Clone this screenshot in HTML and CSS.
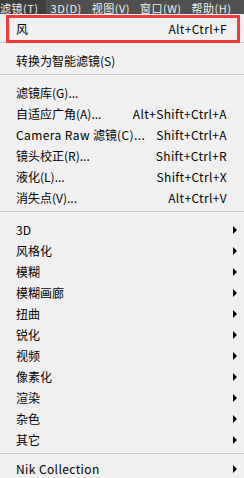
FILE: index.html
```html
<!DOCTYPE html>
<html lang="zh-CN">
<head>
  <meta charset="UTF-8" />
  <title>滤镜菜单</title>
  <link rel="stylesheet" href="styles.css">
</head>
<body>
  <div class="menubar">
    <span class="bar-item active">滤镜(T)</span>
    <span class="bar-item">3D(D)</span>
    <span class="bar-item">视图(V)</span>
    <span class="bar-item">窗口(W)</span>
    <span class="bar-item">帮助(H)</span>
  </div>

  <div class="menu">
    <div class="row hl"><span class="label">风</span><span class="key">Alt+Ctrl+F</span></div>
    <div class="sep"></div>
    <div class="row"><span class="label">转换为智能滤镜(S)</span></div>
    <div class="sep"></div>
    <div class="row"><span class="label">滤镜库(G)...</span></div>
    <div class="row"><span class="label">自适应广角(A)...</span><span class="key">Alt+Shift+Ctrl+A</span></div>
    <div class="row"><span class="label"><span class="lat">Camera Raw </span>滤镜<span class="lat">(C)...</span></span><span class="key">Shift+Ctrl+A</span></div>
    <div class="row"><span class="label">镜头校正(R)...</span><span class="key">Shift+Ctrl+R</span></div>
    <div class="row"><span class="label">液化(L)...</span><span class="key">Shift+Ctrl+X</span></div>
    <div class="row"><span class="label">消失点(V)...</span><span class="key">Alt+Ctrl+V</span></div>
    <div class="sep"></div>
    <div class="row"><span class="label">3D</span><span class="arrow"></span></div>
    <div class="row"><span class="label">风格化</span><span class="arrow"></span></div>
    <div class="row"><span class="label">模糊</span><span class="arrow"></span></div>
    <div class="row"><span class="label">模糊画廊</span><span class="arrow"></span></div>
    <div class="row"><span class="label">扭曲</span><span class="arrow"></span></div>
    <div class="row"><span class="label">锐化</span><span class="arrow"></span></div>
    <div class="row"><span class="label">视频</span><span class="arrow"></span></div>
    <div class="row"><span class="label">像素化</span><span class="arrow"></span></div>
    <div class="row"><span class="label">渲染</span><span class="arrow"></span></div>
    <div class="row"><span class="label">杂色</span><span class="arrow"></span></div>
    <div class="row"><span class="label">其它</span><span class="arrow"></span></div>
    <div class="sep last"></div>
    <div class="row end"><span class="label lat">Nik Collection</span><span class="arrow"></span></div>
  </div>
</body>
</html>
```

FILE: styles.css
```css
html, body { margin: 0; padding: 0; }
body {
  width: 244px;
  height: 478px;
  overflow: hidden;
  background: #f0f0f0;
  font-family: "Noto Sans CJK SC", "Liberation Sans", sans-serif;
  font-size: 12px;
  color: #000;
}

.menubar {
  display: flex;
  height: 14px;
  background: #505050;
  color: #f0f0f0;
  white-space: nowrap;
}
.bar-item {
  height: 14px;
  padding: 0 5px;
  font-size: 11px;
  line-height: 16px;
  letter-spacing: 0.5px;
  flex-shrink: 0;
}
.bar-item.active { padding: 0 7px 0 0; background: #3e3e3e; }

.menu { padding-top: 4px; }

.row {
  position: relative;
  display: flex;
  align-items: center;
  height: 21px;
  line-height: 21px;
  padding: 0 7px 0 16px;
  white-space: nowrap;
}
.row.end { height: 20px; line-height: 20px; }
.label { flex: 1; }
.key { margin-right: 10px; letter-spacing: 0.35px; }
.lat { letter-spacing: 0.4px; }

.arrow {
  width: 0;
  height: 0;
  border-left: 4px solid #000;
  border-top: 4px solid transparent;
  border-bottom: 4px solid transparent;
}

.hl::after {
  content: "";
  position: absolute;
  top: -3px;
  bottom: -4px;
  left: 6px;
  right: 4px;
  border: 3px solid #f03a3a;
}

.sep {
  height: 1px;
  margin: 3px 0 7px;
  background: #c8c8c8;
}
.sep.last { margin-bottom: 5px; }
```
